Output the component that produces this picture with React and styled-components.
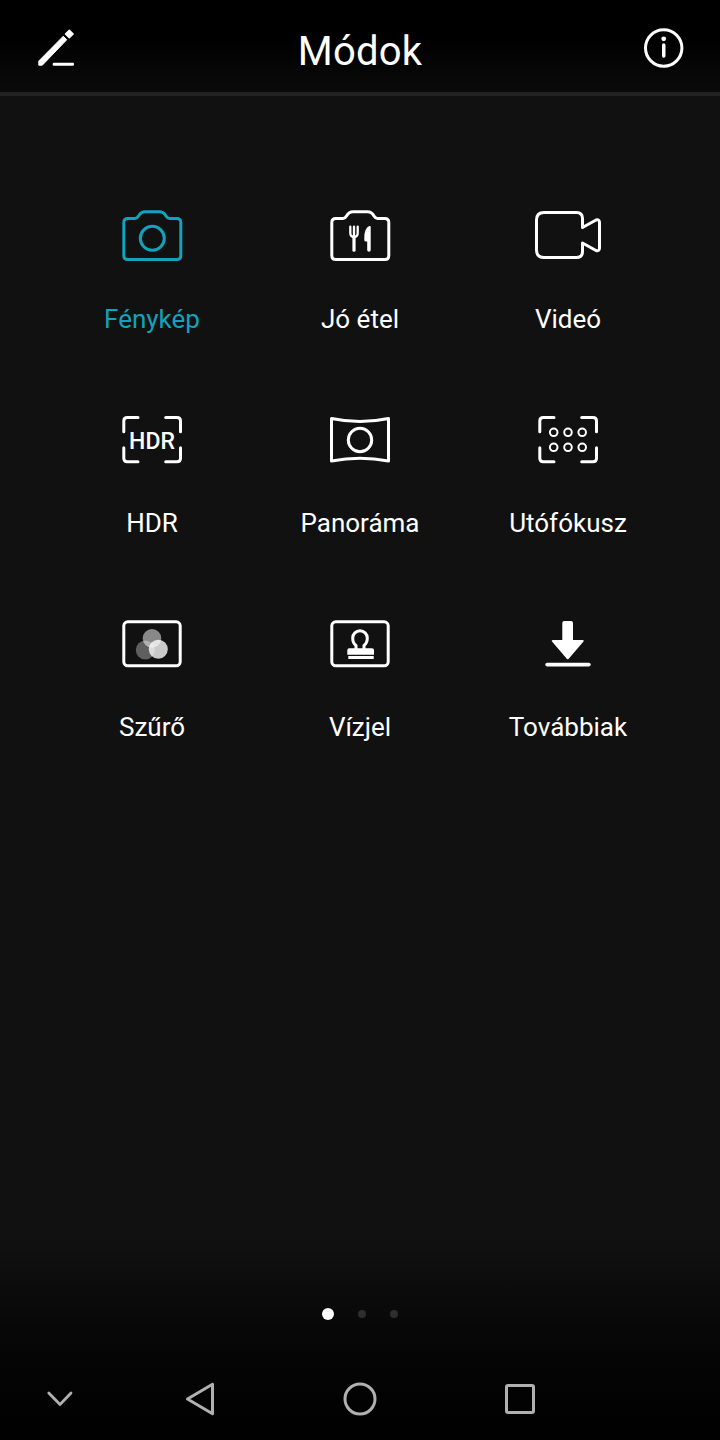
import React from "react";
import styled, { createGlobalStyle } from "styled-components";

const Global = createGlobalStyle`
  html, body { margin: 0; padding: 0; background: #111; }
  * { box-sizing: border-box; }
`;
const Page = styled.div`
  width: 720px; height: 1440px; display: flex; flex-direction: column;
  background: #111111; color: #fff; font-family: Roboto, "Noto Sans", sans-serif; overflow: hidden;
`;
const Header = styled.header`
  height: 96px; flex: none; display: flex; align-items: center; justify-content: space-between;
  padding: 8px 36px 0; border-bottom: 4px solid #222;
  background: linear-gradient(#000 0%, #000 40%, #0a0a0a 100%);
`;
const Title = styled.h1`
  margin: 3px 0 0; font-size: 40px; font-weight: 400; line-height: 44px; color: #fff; letter-spacing: 0.2px;
`;
const HeaderIcon = styled.svg`
  width: 40px; height: 40px; display: block; flex: none; color: #fff; overflow: visible;
`;
const Grid = styled.main`
  flex: 1; display: grid; grid-template-columns: repeat(3, 208px); grid-auto-rows: 204px;
  padding: 96px 48px 0; align-content: start;
`;
const Cell = styled.div`
  display: flex; flex-direction: column; align-items: center; padding-top: 8px;
  color: ${(p) => (p.$active ? "#12a3bc" : "#fff")};
`;
const CellIcon = styled.svg`
  width: 72px; height: 72px; display: block;
`;
const Label = styled.span`
  margin-top: 32px; font-size: 26px; line-height: 30px; font-weight: 400;
`;
const Footer = styled.footer`
  height: 200px; flex: none; display: flex; flex-direction: column;
  background: linear-gradient(#111 0%, #070707 45%, #000 100%);
`;
const Dots = styled.div`
  display: flex; align-items: center; justify-content: center; gap: 24px; margin-top: 68px; height: 12px;
`;
const Dot = styled.span`
  width: ${(p) => (p.$on ? 12 : 8)}px; height: ${(p) => (p.$on ? 12 : 8)}px; border-radius: 50%;
  background: ${(p) => (p.$on ? "#fff" : "#2e2e2e")};
`;
const NavBar = styled.nav`
  display: grid; grid-template-columns: 120px repeat(3, 160px); justify-items: center;
  margin-top: 59px; height: 40px;
`;
const NavIcon = styled.svg`
  width: 40px; height: 40px; display: block; color: #b0b0b0;
`;

const S = { fill: "none", stroke: "currentColor", strokeWidth: 3, strokeLinejoin: "round", strokeLinecap: "round" };
const CAMERA = "M7.800 22.500 Q7.800 18.500 11.800 18.500 H19 Q21 18.500 22.500 16 Q25 11.800 29 11.800 H43.600 Q47.600 11.800 50 16 Q51.500 18.500 53.500 18.500 H60.800 Q64.800 18.500 64.800 22.500 V55.500 Q64.800 59.500 60.800 59.500 H11.800 Q7.800 59.500 7.800 55.500 Z";

function Ic({ children }) {
  return <CellIcon viewBox="0 0 72 72">{children}</CellIcon>;
}

const Bracket = () => (
  <path {...S} d="M7.800 27.700 V17 Q7.800 13.500 11.300 13.500 H22 M49.700 13.500 H61 Q64.500 13.500 64.500 17 V27.700 M7.800 43.700 V54.300 Q7.800 57.800 11.300 57.800 H22 M49.700 57.800 H61 Q64.500 57.800 64.500 54.300 V43.700" />
);

const items = [
  ["Fénykép", <Ic><path {...S} d={CAMERA} /><circle {...S} cx="36.300" cy="38.300" r="12" /></Ic>, true],
  ["Jó étel", (
    <Ic>
      <path {...S} d={CAMERA} />
      <path fill="none" stroke="currentColor" strokeWidth="2.300" strokeLinecap="round" d="M26.300 26.700 V33 Q26.300 37 30 37 Q33.700 37 33.700 33 V26.700 M30 26.700 V37" />
      <path fill="none" stroke="currentColor" strokeWidth="3.200" strokeLinecap="round" d="M30 36 V50.200" />
      <path fill="currentColor" d="M46.700 27 Q46.700 25.500 45.300 26 Q40.300 28 40.300 38 V40 Q40.300 41.500 42 41.500 H43.200 V50 Q43.200 51.700 45 51.700 Q46.700 51.700 46.700 50 Z" />
    </Ic>
  )],
  ["Videó", (
    <Ic>
      <path {...S} d="M12 12.500 H44.500 Q50.500 12.500 50.500 18.500 V27.500 L64 20 Q67.500 19 67.500 22.500 V48 Q67.500 51.500 64 50.500 L50.500 43 V51.500 Q50.500 57.500 44.500 57.500 H12 Q4.500 57.500 4.500 50 V20 Q4.500 12.500 12 12.500 Z" />
    </Ic>
  )],
  ["HDR", <Ic><Bracket /><text x="36" y="45" textAnchor="middle" fill="currentColor" fontFamily="Roboto, sans-serif" fontWeight="500" fontSize="23">HDR</text></Ic>],
  ["Panoráma", (
    <Ic>
      <path {...S} d="M7.500 14.500 Q36 20.500 64.500 14.500 V57 Q36 51.600 7.500 57 Z" />
      <circle {...S} cx="36" cy="36" r="11.700" />
    </Ic>
  )],
  ["Utófókusz", (
    <Ic>
      <Bracket />
      {[21.700, 36, 50.200].map((x) => [28.300, 43.300].map((y) => (
        <circle key={`${x}-${y}`} cx={x} cy={y} r="3.800" fill="none" stroke="currentColor" strokeWidth="2" />
      )))}
    </Ic>
  )],
  ["Szűrő", (
    <Ic>
      <rect {...S} x="7.800" y="13.800" width="56.400" height="44" rx="4" />
      <circle cx="36" cy="30.300" r="9.300" fill="#fff" fillOpacity="0.5" />
      <circle cx="29.300" cy="42" r="9.500" fill="#fff" fillOpacity="0.33" />
      <circle cx="42.300" cy="41.300" r="9.500" fill="#fff" fillOpacity="0.78" />
    </Ic>
  )],
  ["Vízjel", (
    <Ic>
      <rect {...S} x="7.800" y="13.800" width="56.400" height="44" rx="4" />
      <path fill="none" stroke="currentColor" strokeWidth="3" strokeLinejoin="round" d="M32 41 V37.500 Q28.700 35 28.700 30 A7.300 7.300 0 0 1 43.300 30 Q43.300 35 40 37.500 V41" />
      <path fill="currentColor" d="M23.300 42.300 Q23.300 40.300 25.300 40.300 H48 Q50 40.300 50 42.300 V46.700 H23.300 Z M24.300 48 H49.700 V51 H24.300 Z" />
    </Ic>
  )],
  ["Továbbiak", (
    <Ic>
      <path fill="currentColor" d="M30.300 15 Q30.300 13 32.300 13 H39 Q41 13 41 15 V32 H50.500 Q52.500 32 51.500 33.500 L36.500 51 Q35.700 51.600 35 51 L20 33.500 Q19 32 21 32 H30.300 Z" />
      <rect x="13.300" y="54.700" width="45.400" height="3.800" rx="1.900" fill="currentColor" />
    </Ic>
  )],
];

export default function App() {
  return (
    <Page>
      <Global />
      <Header>
        <HeaderIcon viewBox="0 0 40 40">
          <path fill="currentColor" stroke="currentColor" strokeWidth="1" strokeLinejoin="round" d="M2.800 31 L27.300 6.200 L30.700 9.800 L6.300 35.200 H2.800 Z" />
          <path fill="currentColor" stroke="currentColor" strokeWidth="1.500" strokeLinejoin="round" d="M29.500 4 L33.300 0.200 L37.100 4 L33.300 7.800 Z" />
          <rect x="16.700" y="32.700" width="21.300" height="3" rx="1.200" fill="currentColor" />
        </HeaderIcon>
        <Title>Módok</Title>
        <HeaderIcon viewBox="0 0 40 40">
          <circle cx="19.700" cy="18" r="18.200" fill="none" stroke="currentColor" strokeWidth="3" />
          <circle cx="19.700" cy="8.800" r="2.400" fill="currentColor" />
          <rect x="18" y="13.300" width="3.500" height="14.400" rx="1.750" fill="currentColor" />
        </HeaderIcon>
      </Header>
      <Grid>
        {items.map(([label, icon, active]) => (
          <Cell key={label} $active={active}>
            {icon}
            <Label>{label}</Label>
          </Cell>
        ))}
      </Grid>
      <Footer>
        <Dots>
          <Dot $on />
          <Dot />
          <Dot />
        </Dots>
        <NavBar>
          <NavIcon viewBox="0 0 40 40">
            <path fill="none" stroke="currentColor" strokeWidth="2.800" strokeLinecap="round" strokeLinejoin="round" d="M8.800 14 L20 25.500 L31 14" />
          </NavIcon>
          <NavIcon viewBox="0 0 40 40">
            <path fill="none" stroke="currentColor" strokeWidth="3" strokeLinejoin="round" d="M32.500 5.200 V34.800 L7.500 20 Z" />
          </NavIcon>
          <NavIcon viewBox="0 0 40 40">
            <circle cx="20" cy="20" r="15" fill="none" stroke="currentColor" strokeWidth="3" />
          </NavIcon>
          <NavIcon viewBox="0 0 40 40">
            <rect x="6.500" y="6.500" width="27" height="27" rx="1.500" fill="none" stroke="currentColor" strokeWidth="3" />
          </NavIcon>
        </NavBar>
      </Footer>
    </Page>
  );
}
